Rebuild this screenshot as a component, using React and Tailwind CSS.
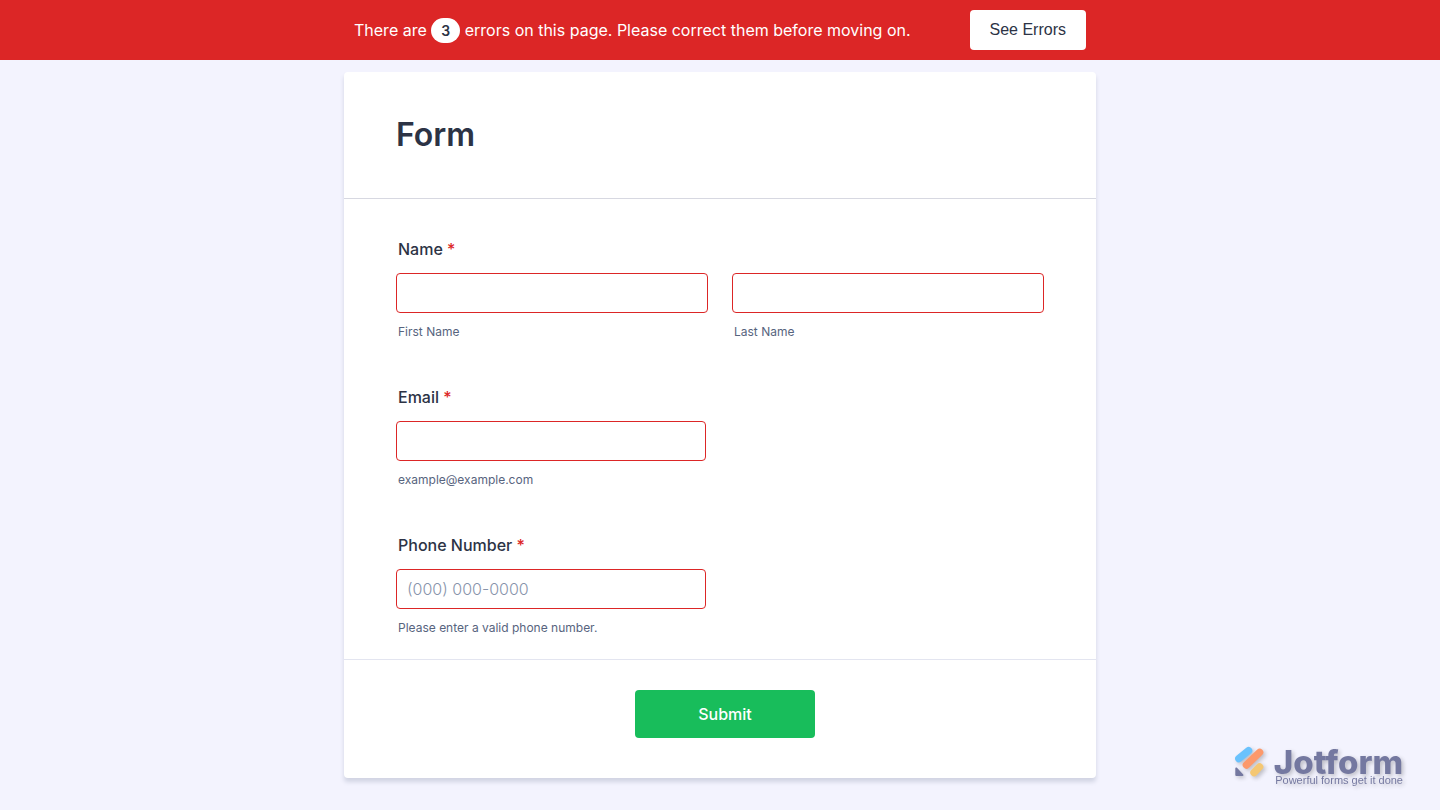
import React, { useState } from "react";

const Required = () => <span className="text-[#dc2626]">*</span>;

function TextField({ id, hint, className = "", ...rest }) {
    return (
        <div className={className}>
            <input
                id={id}
                aria-describedby={`${id}-hint`}
                aria-invalid="true"
                className="block w-full h-10 px-[10px] rounded border border-[#dc2626] bg-white text-base text-[#2c3345] placeholder:font-light placeholder:text-[#8894ab] outline-none focus:ring-2 focus:ring-red-200"
                {...rest}
            />
            <label id={`${id}-hint`} htmlFor={id} className="block mt-[10px] ml-[2px] text-xs leading-[18px] text-[#57647e]">
                {hint}
            </label>
        </div>
    );
}

function JotformBadge() {
    return (
        <a
            href="#jotform"
            aria-label="Jotform - Powerful forms get it done"
            className="fixed right-[37px] bottom-[25px] flex items-start gap-2 opacity-75 drop-shadow-[2px_2px_2px_rgba(0,0,0,0.3)]"
        >
            <svg width="32" height="32" viewBox="0 0 32 32" fill="none" strokeLinecap="round" strokeWidth="7.4">
                <path d="M4.8 12.6 14.6 4.6" stroke="#3db2fd" />
                <path d="M12.4 19 25.6 6.4" stroke="#ff7b3a" />
                <path d="M20 26.6 25.6 20.8" stroke="#f5b945" />
                <path d="M1.3 22.4V29a1 1 0 0 0 1 1h6.3c.8 0 1.1-.9.6-1.4L3 21.8c-.6-.6-1.7-.2-1.7.6Z" fill="#4a4f80" />
            </svg>
            <span className="mt-[3px] flex flex-col items-end text-[#4a4f80]">
                <span className="text-[33px] leading-[26px] font-extrabold">Jotform</span>
                <span className="font-['Liberation_Sans',Arial,sans-serif] text-[11px] leading-[10px]">
                    Powerful forms get it done
                </span>
            </span>
        </a>
    );
}

export default function App() {
    const [form, setForm] = useState({ first: "", last: "", email: "", phone: "" });

    const bind = (key) => ({
        name: key,
        value: form[key],
        onChange: (e) => setForm({ ...form, [key]: e.target.value }),
    });

    return (
        <div className="min-h-screen bg-[#f3f3fe] font-[Inter,sans-serif] text-[#2c3345]">
            <div role="alert" className="h-[60px] bg-[#dc2626] px-4">
                <div className="mx-auto h-full max-w-[732px] flex items-center justify-between">
                    <p className="text-base text-white">
                        There are{" "}
                        <span className="inline-block rounded-full bg-white px-[10px] text-sm leading-[25px] font-semibold text-[#2c3345]">
                            3
                        </span>{" "}
                        errors on this page. Please correct them before moving on.
                    </p>
                    <button
                        type="button"
                        onClick={() => document.getElementById("first").focus()}
                        className="h-10 px-5 rounded bg-white font-['Liberation_Sans',Arial,sans-serif] text-base text-[#2c3345]"
                    >
                        See Errors
                    </button>
                </div>
            </div>

            <form
                noValidate
                onSubmit={(e) => e.preventDefault()}
                className="mx-auto mt-3 max-w-[752px] rounded bg-white shadow-[0_4px_4px_rgba(87,100,126,0.21)]"
            >
                <header className="px-[52px] py-[45px] border-b border-[#d7d8e1]">
                    <h1 className="text-[32px] leading-[36px] font-semibold">Form</h1>
                </header>

                <div className="px-[52px] pt-[38px] pb-[22px] flex flex-col gap-[44px]">
                    <fieldset>
                        <legend className="mb-3 ml-[2px] text-base font-medium">
                            Name <Required />
                        </legend>
                        <div className="grid grid-cols-2 gap-6">
                            <TextField id="first" type="text" hint="First Name" {...bind("first")} />
                            <TextField id="last" type="text" hint="Last Name" {...bind("last")} />
                        </div>
                    </fieldset>

                    <div>
                        <label htmlFor="email" className="block mb-3 ml-[2px] text-base font-medium">
                            Email <Required />
                        </label>
                        <TextField
                            id="email"
                            type="email"
                            hint="example@example.com"
                            className="max-w-[310px]"
                            {...bind("email")}
                        />
                    </div>

                    <div>
                        <label htmlFor="phone" className="block mb-3 ml-[2px] text-base font-medium">
                            Phone Number <Required />
                        </label>
                        <TextField
                            id="phone"
                            type="tel"
                            hint="Please enter a valid phone number."
                            placeholder="(000) 000-0000"
                            className="max-w-[310px]"
                            {...bind("phone")}
                        />
                    </div>
                </div>

                <footer className="flex justify-center pt-[30px] pb-10 pl-[10px] border-t border-[#e3e5f0]">
                    <button
                        type="submit"
                        className="w-[180px] h-12 rounded bg-[#18bd5b] text-base font-medium text-white hover:bg-[#16aa52]"
                    >
                        Submit
                    </button>
                </footer>
            </form>

            <JotformBadge />
        </div>
    );
}
